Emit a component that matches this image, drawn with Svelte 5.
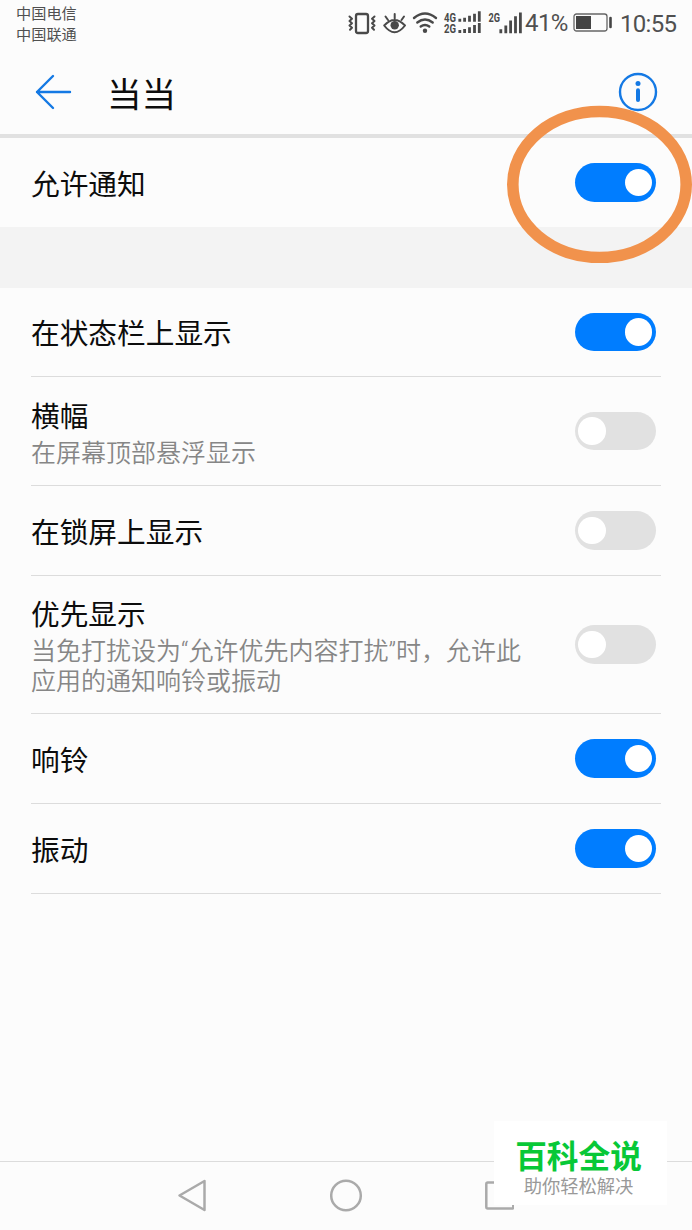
<script>
	let allow = $state(true);

	let options = $state([
		{ id: 'status', title: '在状态栏上显示', height: 89, on: true },
		{ id: 'banner', title: '横幅', note: ['在屏幕顶部悬浮显示'], height: 109, on: false },
		{ id: 'lock', title: '在锁屏上显示', height: 90, on: false },
		{ id: 'priority', title: '优先显示', note: ['当免打扰设为“允许优先内容打扰”时，允许此', '应用的通知响铃或振动'], height: 138, on: false },
		{ id: 'ring', title: '响铃', height: 90, on: true },
		{ id: 'vibrate', title: '振动', height: 90, on: true }
	]);
</script>

{#snippet toggle(on, label, flip)}
	<button class="toggle" class:on role="switch" aria-checked={on} aria-label={label} onclick={flip}>
		<span class="knob"></span>
	</button>
{/snippet}

<div class="screen">
	<div class="status">
		<div class="carriers">
			<div>中国电信</div>
			<div>中国联通</div>
		</div>
		<svg class="icons" width="178" height="40" viewBox="347 0 178 40">
			<g fill="none" stroke="#494949" stroke-width="2" stroke-linecap="round" stroke-linejoin="round">
				<rect x="356" y="14" width="12" height="19" rx="2" stroke-width="2.3" />
				<path d="M349.5 16.5l2.5 2.2-2.5 2.3 2.5 2.2-2.5 2.3 2.5 2.2-2 2M374.5 16.5l-2.5 2.2 2.5 2.3-2.5 2.2 2.5 2.3-2.5 2.2 2 2" />
				<path d="M384.2 25.5Q394.5 14.5 405 25.5Q394.5 39 384.2 25.5ZM385.5 16.5l2.5 3.5M394.7 14v4.5M404 16.5l-2.5 3.5" />
				<path d="M414 18Q425 9 436 18M417.3 22.5Q425 16.5 432.7 22.5M420.7 26.5Q425 23.3 429.3 26.5" stroke-width="2.4" />
			</g>
			<g fill="#494949">
				<circle cx="394.7" cy="25.3" r="4.2" />
				<circle cx="425" cy="30.8" r="2.2" />
				<text x="444" y="21.5" textLength="12" lengthAdjust="spacingAndGlyphs">4G</text>
				<text x="444" y="33.2" textLength="12" lengthAdjust="spacingAndGlyphs">2G</text>
				<text x="488.5" y="21.5" textLength="11.5" lengthAdjust="spacingAndGlyphs">2G</text>
			</g>
			<g stroke="#494949" stroke-width="2.8">
				<path d="M459.8 18.7v3M464.6 17.7v4M469.5 15.7v6M474.5 13.7v8M479.3 11.2v10.5" />
				<path d="M459.8 30v3M464.6 29v4M469.5 27.2v5.8M474.5 25v8M479.3 23v10" />
				<path d="M500.8 29.2v4M505.8 25.5v7.7M510.6 20.5v12.7M515.5 16.2v17M520.4 12.5v20.7" />
			</g>
		</svg>
		<span class="percent">41%</span>
		<svg class="battery" width="41" height="20" viewBox="0 0 41 20">
			<rect x="1" y="1" width="33" height="17" rx="2.5" fill="none" stroke="#666" stroke-width="1.3" />
			<path d="M3 3h15v13H3z" fill="#444" />
			<path d="M37.5 5v9" stroke="#444" stroke-width="2.6" stroke-linecap="round" />
		</svg>
		<span class="time">10:55</span>
	</div>

	<header>
		<svg class="back" width="38" height="38" viewBox="0 0 38 38">
			<path d="M19 3L3 19l16 16M3 19h33" fill="none" stroke="#1479e4" stroke-width="2.4" stroke-linecap="round" stroke-linejoin="round" />
		</svg>
		<h1>当当</h1>
		<svg class="info" width="40" height="40" viewBox="0 0 40 40">
			<circle cx="20" cy="20" r="18" fill="none" stroke="#1479e4" stroke-width="2.4" />
			<circle cx="20" cy="11.5" r="2.5" fill="#1479e4" />
			<path d="M20 18.3v9.8" stroke="#1479e4" stroke-width="4" stroke-linecap="round" />
		</svg>
	</header>

	<section class="allow">
		<div class="title">允许通知</div>
		{@render toggle(allow, '允许通知', () => (allow = !allow))}
		<svg class="mark" width="186" height="158" viewBox="0 0 186 158">
			<ellipse cx="93.5" cy="79.5" rx="86.7" ry="73" fill="none" stroke="#f1924c" stroke-width="11.6" />
		</svg>
	</section>

	<div class="gap"></div>

	<ul>
		{#each options as option (option.id)}
			<li style="height: {option.height}px">
				<div class="text" class:noted={option.note}>
					<div class="title">{option.title}</div>
					{#if option.note}
						<div class="note">
							{#each option.note as line}
								<div>{line}</div>
							{/each}
						</div>
					{/if}
				</div>
				{@render toggle(option.on, option.title, () => (option.on = !option.on))}
			</li>
		{/each}
	</ul>

	<nav>
		<svg width="30" height="34" viewBox="0 0 30 34">
			<path d="M27.5 2v29L2.5 16.5z" fill="none" stroke="#aaa" stroke-width="2.5" stroke-linejoin="round" />
		</svg>
		<svg width="34" height="34" viewBox="0 0 34 34">
			<circle cx="17" cy="16.5" r="14.8" fill="none" stroke="#aaa" stroke-width="2.5" />
		</svg>
		<svg width="30" height="34" viewBox="0 0 30 34">
			<rect x="2.3" y="3.5" width="27" height="26" rx="1.5" fill="none" stroke="#aaa" stroke-width="2.5" />
		</svg>
	</nav>

	<div class="watermark">
		<div class="brand">百科全说</div>
		<div class="slogan">助你轻松解决</div>
	</div>
</div>

<style>
	:global(body) {
		margin: 0;
		background: #fcfcfc;
	}

	.screen {
		position: relative;
		display: flex;
		flex-direction: column;
		width: 692px;
		height: 1230px;
		overflow: hidden;
		background: #fcfcfc;
		color: #0c0c0c;
		font-family: Roboto, "Noto Sans CJK SC", sans-serif;
	}

	.status {
		display: flex;
		height: 50px;
		flex: none;
		color: #505050;
	}

	.carriers {
		width: 331px;
		padding: 4px 0 0 16px;
		font-size: 15.2px;
		line-height: 21px;
	}

	.icons text {
		font: bold 12px Roboto, sans-serif;
	}

	.percent {
		width: 48px;
		font-size: 24px;
		letter-spacing: -0.6px;
		line-height: 46px;
	}

	.battery {
		margin-top: 13px;
	}

	.time {
		margin-left: 6px;
		font-size: 24px;
		letter-spacing: -0.7px;
		line-height: 49px;
	}

	header {
		display: flex;
		align-items: center;
		box-sizing: border-box;
		height: 88px;
		flex: none;
		padding: 0 34px 0 34px;
		border-bottom: 4px solid #e1e1e1;
	}

	h1 {
		flex: 1;
		margin: 6px 0 0 35px;
		font-size: 34.6px;
		font-weight: 400;
		line-height: 44px;
	}

	.allow {
		position: relative;
		display: flex;
		align-items: center;
		justify-content: space-between;
		height: 89px;
		flex: none;
		padding: 0 36px 0 31px;
	}

	.title {
		padding-top: 4px;
		font-size: 28.7px;
		line-height: 40px;
	}

	.noted .title {
		padding: 3px 0 2px;
	}

	.mark {
		position: absolute;
		left: 506px;
		top: -33px;
		pointer-events: none;
	}

	.gap {
		height: 61px;
		flex: none;
		background: #f3f3f3;
	}

	ul {
		flex: 1;
		margin: 0;
		padding: 0 31px;
		list-style: none;
	}

	li {
		display: flex;
		align-items: center;
		justify-content: space-between;
		box-sizing: border-box;
		padding-right: 5px;
		border-bottom: 1px solid #dcdcdc;
	}

	.note {
		color: #868686;
		font-family: Roboto, "Noto Sans CJK SC DemiLight", "Noto Sans CJK SC", sans-serif;
		font-size: 25px;
		font-weight: 350;
		line-height: 30px;
		white-space: nowrap;
	}

	.toggle {
		display: flex;
		align-items: center;
		width: 81px;
		height: 38.5px;
		flex: none;
		padding: 0 4px 0 3px;
		border: 0;
		border-radius: 20px;
		background: #e1e1e1;
	}

	.toggle.on {
		justify-content: flex-end;
		background: #007dff;
	}

	.knob {
		width: 27.5px;
		height: 27.5px;
		border-radius: 50%;
		background: #fff;
	}

	nav {
		display: flex;
		align-items: center;
		justify-content: space-between;
		box-sizing: border-box;
		height: 69px;
		flex: none;
		padding: 0 178px 0 177px;
		border-top: 1px solid #dcdcdc;
	}

	.watermark {
		position: absolute;
		left: 494px;
		top: 1121px;
		box-sizing: border-box;
		width: 173px;
		height: 84px;
		padding: 15px 4px 0 0;
		background: #fff;
		text-align: center;
	}

	.brand {
		color: #08c837;
		font-size: 31.7px;
		font-weight: 700;
		line-height: 44px;
	}

	.slogan {
		color: #999;
		font-size: 18.3px;
		line-height: 14px;
	}
</style>
